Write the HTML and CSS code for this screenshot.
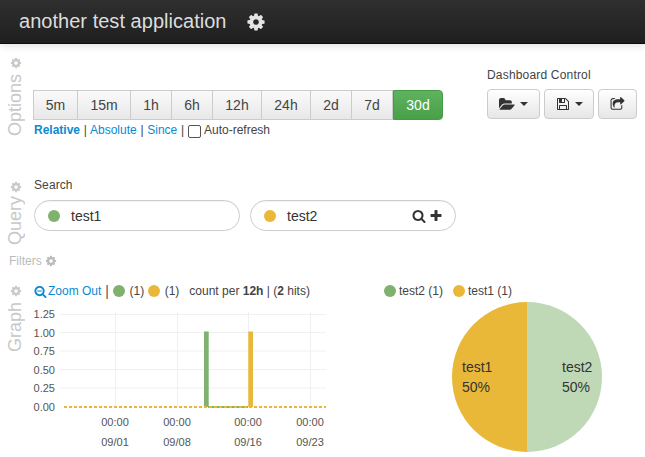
FILE: index.html
```html
<!DOCTYPE html>
<html lang="en">
<head>
<meta charset="utf-8">
<title>another test application</title>
<link rel="stylesheet" href="styles.css">
</head>
<body>
<svg class="defs" width="0" height="0" aria-hidden="true">
  <symbol id="cog" viewBox="0 0 1792 1792"><path d="M1152 896q0-106-75-181t-181-75-181 75-75 181 75 181 181 75 181-75 75-181zm512-109v222q0 12-8 23t-20 13l-185 28q-19 54-39 91 35 50 107 138 10 12 10 25t-9 23q-27 37-99 108t-94 71q-12 0-26-9l-138-108q-44 23-91 38-16 136-29 186-7 28-36 28h-222q-14 0-24.500-8.500t-11.500-21.500l-28-184q-49-16-90-37l-141 107q-10 9-25 9-14 0-25-11-126-114-165-168-7-10-7-23 0-12 8-23 15-21 51-66.500t54-70.500q-27-50-41-99l-183-27q-13-2-21-12.500t-8-23.500v-222q0-12 8-23t19-13l186-28q14-46 39-92-40-57-107-138-10-12-10-24 0-10 9-23 26-36 98.500-107.500t94.500-71.500q13 0 26 10l138 107q44-23 91-38 16-136 29-186 7-28 36-28h222q14 0 24.500 8.500t11.500 21.500l28 184q49 16 90 37l142-107q9-9 24-9 13 0 25 10 129 119 165 170 7 8 7 22 0 12-8 23-15 21-51 66.500t-54 70.500q26 50 41 98l183 28q13 2 21 12.500t8 23.500z"/></symbol>
  <symbol id="search" viewBox="0 0 1792 1792"><path d="M1216 832q0-185-131.500-316.500t-316.500-131.500-316.500 131.500-131.500 316.500 131.500 316.500 316.500 131.500 316.500-131.500 131.500-316.500zm512 832q0 52-38 90t-90 38q-54 0-90-38l-343-342q-179 124-399 124-143 0-273.500-55.500t-225-150-150-225-55.500-273.500 55.500-273.500 150-225 225-150 273.500-55.500 273.500 55.500 225 150 150 225 55.500 273.500q0 220-124 399l343 343q37 37 37 90z"/></symbol>
  <symbol id="zoomout" viewBox="0 0 1792 1792"><path d="M1088 800v64q0 13-9.500 22.500t-22.500 9.500h-576q-13 0-22.500-9.500t-9.500-22.500v-64q0-13 9.500-22.500t22.500-9.500h576q13 0 22.500 9.500t9.500 22.500zm128 32q0-185-131.500-316.500t-316.500-131.500-316.500 131.500-131.500 316.500 131.500 316.500 316.500 131.500 316.500-131.500 131.500-316.500zm512 832q0 53-37.500 90.500t-90.500 37.500q-54 0-90-38l-343-342q-179 124-399 124-143 0-273.500-55.500t-225-150-150-225-55.500-273.500 55.500-273.500 150-225 225-150 273.500-55.500 273.500 55.500 225 150 150 225 55.500 273.500q0 220-124 399l343 343q37 37 37 90z"/></symbol>
  <symbol id="plus" viewBox="0 0 1792 1792"><path d="M1600 736v192q0 40-28 68t-68 28h-416v416q0 40-28 68t-68 28h-192q-40 0-68-28t-28-68v-416h-416q-40 0-68-28t-28-68v-192q0-40 28-68t68-28h416v-416q0-40 28-68t68-28h192q40 0 68 28t28 68v416h416q40 0 68 28t28 68z"/></symbol>
  <symbol id="folder" viewBox="0 0 1920 1792"><path d="M1879 952q0 31-31 66l-336 396q-43 51-120.500 86.500t-143.500 35.500h-1088q-34 0-60.500-13t-26.500-43q0-31 31-66l336-396q43-51 120.500-86.500t143.500-35.500h1088q34 0 60.500 13t26.500 43zm-343-344v160h-832q-94 0-197 47.500t-164 119.500l-337 396-5 6q0-4-.5-12.500t-.5-12.500v-960q0-92 66-158t158-66h320q92 0 158 66t66 158v32h544q92 0 158 66t66 158z"/></symbol>
  <symbol id="save" viewBox="0 0 1792 1792"><path d="M512 1536h768v-384h-768v384zm896 0h128v-896q0-14-10-38.500t-20-34.500l-281-281q-10-10-34-20t-39-10v416q0 40-28 68t-68 28h-576q-40 0-68-28t-28-68v-416h-128v1280h128v-416q0-40 28-68t68-28h832q40 0 68 28t28 68v416zm-384-928v-320q0-13-9.500-22.500t-22.500-9.500h-192q-13 0-22.500 9.500t-9.500 22.500v320q0 13 9.500 22.500t22.500 9.500h192q13 0 22.500-9.500t9.500-22.500zm640 32v928q0 40-28 68t-68 28h-1344q-40 0-68-28t-28-68v-1344q0-40 28-68t68-28h928q40 0 88 20t76 48l280 280q28 28 48 76t20 88z"/></symbol>
  <symbol id="share" viewBox="0 0 1792 1792"><path d="M1472 989v259q0 119-84.500 203.500t-203.500 84.500h-832q-119 0-203.500-84.500t-84.500-203.500v-832q0-119 84.500-203.500t203.500-84.500h255q13 0 22.500 9.500t9.500 22.500q0 27-26 32-77 26-133 60-10 4-16 4h-112q-66 0-113 47t-47 113v832q0 66 47 113t113 47h832q66 0 113-47t47-113v-214q0-19 18-29 28-13 54-37 16-16 35-8 21 9 21 29zm237-496l-384 384q-18 19-45 19-12 0-25-5-39-17-39-59v-192h-160q-323 0-438 131-119 137-74 473 3 23-20 34-8 2-12 2-16 0-26-13-10-14-21-31t-39.500-68.500-49.500-99.500-38.500-114-17.500-122q0-49 3.500-91t14-90 28-88 47-81.500 68.500-74 94.500-61.500 124.500-48.500 159.500-30.500 196.500-11h160v-192q0-42 39-59 13-5 25-5 26 0 45 19l384 384q19 19 19 45t-19 45z"/></symbol>
</svg>

<header class="topbar">
  <span class="brand">another test application</span>
  <svg class="brand-cog"><use href="#cog"/></svg>
</header>

<main>
  <section class="row row-options">
    <div class="side">
      <svg class="side-cog"><use href="#cog"/></svg>
      <span class="side-label">Options</span>
    </div>
    <div class="timepicker">
      <div class="btn-group">
        <span class="seg seg-5m">5m</span><span class="seg seg-15m">15m</span><span class="seg seg-h">1h</span><span class="seg seg-h">6h</span><span class="seg seg-12">12h</span><span class="seg seg-12">24h</span><span class="seg seg-h">2d</span><span class="seg seg-h">7d</span><span class="seg seg-active">30d</span>
      </div>
      <div class="time-links"><a class="link strong">Relative</a> | <a class="link">Absolute</a> | <a class="link">Since</a> | <span class="check"></span> Auto-refresh</div>
    </div>
    <div class="dash">
      <div class="dash-title">Dashboard Control</div>
      <div class="dash-btns">
        <span class="tool tool-open"><svg class="ic-folder"><use href="#folder"/></svg><i class="caret"></i></span>
        <span class="tool tool-save"><svg class="ic-save"><use href="#save"/></svg><i class="caret"></i></span>
        <span class="tool tool-share"><svg class="ic-share"><use href="#share"/></svg></span>
      </div>
    </div>
  </section>

  <section class="row row-query">
    <div class="side">
      <svg class="side-cog"><use href="#cog"/></svg>
      <span class="side-label">Query</span>
    </div>
    <div class="query">
      <div class="query-title">Search</div>
      <div class="pills">
        <div class="pill"><i class="dot green"></i><span class="pill-text">test1</span></div>
        <div class="pill"><i class="dot yellow"></i><span class="pill-text">test2</span>
          <span class="pill-tools"><svg class="ic-search"><use href="#search"/></svg><svg class="ic-plus"><use href="#plus"/></svg></span>
        </div>
      </div>
    </div>
  </section>

  <div class="filters">Filters <svg class="filters-cog"><use href="#cog"/></svg></div>

  <section class="row row-graph">
    <div class="side">
      <svg class="side-cog"><use href="#cog"/></svg>
      <span class="side-label">Graph</span>
    </div>
    <div class="histogram">
      <div class="graph-legend">
        <svg class="ic-zoom"><use href="#zoomout"/></svg><a class="link">Zoom Out</a>
        <span class="bar-sep">|</span>
        <i class="dot green"></i><span class="count">(1)</span>
        <i class="dot yellow"></i><span class="count">(1)</span>
        <span class="per">count per <b>12h</b> | (<b>2</b> hits)</span>
      </div>
      <svg class="chart" width="296" height="152" viewBox="30 305 296 152">
        <g class="grid">
          <path d="M60 314.500H326M60 332.500H326M60 351H326M60 369.500H326M60 388H326"/>
          <path d="M115.500 312V407M177.500 312V407M248.500 312V407M310.500 312V407"/>
        </g>
        <g class="y-labels">
          <text x="55" y="318">1.25</text>
          <text x="55" y="337">1.00</text>
          <text x="55" y="355">0.75</text>
          <text x="55" y="374">0.50</text>
          <text x="55" y="392">0.25</text>
          <text x="55" y="411">0.00</text>
        </g>
        <rect class="s-green" x="204" y="331.500" width="4.700" height="75.500"/>
        <rect class="s-yellow" x="248.300" y="331.500" width="4.700" height="75.500"/>
        <path class="base-green" d="M208 407H248"/>
        <path class="base-yellow" d="M64 407H326"/>
        <g class="x-labels">
          <text x="115" y="426">00:00</text><text x="177" y="426">00:00</text><text x="248" y="426">00:00</text><text x="310" y="426">00:00</text>
          <text x="115" y="446">09/01</text><text x="177" y="446">09/08</text><text x="248" y="446">09/16</text><text x="310" y="446">09/23</text>
        </g>
      </svg>
    </div>
    <div class="terms">
      <div class="terms-legend">
        <i class="dot green"></i><span>test2 (1)</span>
        <i class="dot yellow"></i><span>test1 (1)</span>
      </div>
      <svg class="pie" width="152" height="152" viewBox="451 301 152 152">
        <path class="s-yellow" d="M527 302A75 75 0 0 0 527 452Z"/>
        <path class="s-pale" d="M527 302A75 75 0 0 1 527 452Z"/>
        <g class="pie-labels">
          <text x="462" y="372">test1</text><text x="462" y="392">50%</text>
          <text x="562" y="372">test2</text><text x="562" y="392">50%</text>
        </g>
      </svg>
    </div>
  </section>
</main>
</body>
</html>
```

FILE: styles.css
```css
* { box-sizing: border-box; }
html, body { margin: 0; height: 100%; overflow: hidden; background: #fff; }
body { font: 12px/15px "Liberation Sans", Arial, sans-serif; color: #444; width: 645px; height: 457px; }
.defs { display: block; height: 0; }
svg { fill: currentColor; display: block; }

.topbar {
  height: 44px; display: flex; align-items: center; padding: 0 0 1px 19px; color: #ddd;
  background: linear-gradient(#2f2f2f, #1f1f1f); border-bottom: 1px solid #0c0c0c;
  box-shadow: 0 2px 8px rgba(0,0,0,.12);
}
.brand { font-size: 20px; line-height: 24px; letter-spacing: .03px; }
.brand-cog { width: 20px; height: 20px; margin: 2px 0 0 19px; color: #e4e4e4; }

.row { display: flex; }
.side { width: 34px; flex: none; display: flex; flex-direction: column; align-items: center; color: #c9c9c9; }
.side-cog { width: 12px; height: 12px; margin: 0 3px 0 0; flex: none; }
.side-label { writing-mode: vertical-rl; transform: rotate(180deg); font-size: 18px; line-height: 20px; margin: 5px 5px 0 0; color: #c8c8c8; }
.row-query .side-label { margin-top: 3px; }
.row-graph .side-label { margin-top: 5px; }

.row-options { height: 130px; padding-top: 13px; }
.timepicker { padding-top: 33px; width: 453px; }
.btn-group { display: flex; width: 410px; height: 30px; margin-left: -1px; }
.seg {
  display: flex; align-items: center; justify-content: center; font-size: 14px; color: #444;
  background: linear-gradient(#fafafa, #e8e8e8); border: 1px solid #ccc; border-left-width: 0;
}
.seg:first-child { border-left-width: 1px; }
.seg-5m { width: 45px; } .seg-15m { width: 53px; } .seg-h { width: 41px; } .seg-12 { width: 49px; }
.seg-active { width: 50px; color: #fff; background: linear-gradient(#5fb35f, #48a048); border: 1px solid #449d44; border-radius: 0 4px 4px 0; }
.time-links { line-height: 20px; color: #444; white-space: nowrap; word-spacing: .4px; }
.link { color: #0a8ad0; }
.strong { font-weight: bold; }
.check { display: inline-block; width: 13px; height: 13px; border: 1px solid #555; border-radius: 2px; vertical-align: -4px; background: #fff; }

.dash { padding-top: 10px; }
.dash-title { font-size: 12px; line-height: 16px; letter-spacing: .18px; }
.dash-btns { display: flex; gap: 4px; margin-top: 6px; }
.tool {
  height: 30px; display: flex; align-items: center; justify-content: center; gap: 5px; color: #333;
  background: linear-gradient(#fff, #e6e6e6); border: 1px solid #ccc; border-radius: 4px;
}
.tool-open { width: 53px; } .tool-save { width: 50px; } .tool-share { width: 39px; }
.caret { width: 0; height: 0; border: 4px solid transparent; border-top-color: #333; border-bottom-width: 0; }
.ic-folder { width: 16px; height: 15px; }
.ic-save { width: 14px; height: 14px; }
.ic-share { width: 15px; height: 15px; }

.row-query { height: 81px; margin-top: -1px; }
.row-query .side { padding-top: 8px; }
.query { width: 422px; padding-top: 2px; }
.query-title { line-height: 16px; margin-top: 2px; letter-spacing: .1px; }
.pills { display: flex; gap: 10px; margin-top: 7px; }
.pill {
  width: 206px; height: 31px; display: flex; align-items: center; border: 1px solid #ccc; border-radius: 15.500px;
  padding-left: 13px; font-size: 14px; color: #333; box-shadow: inset 0 1px 1px rgba(0,0,0,.05);
}
.pill .dot { width: 12px; height: 12px; margin-right: 11px; }
.pill-text { padding-top: 1px; }
.dot { display: block; flex: none; width: 12px; height: 12px; border-radius: 50%; }
.green { background: #7eb26d; }
.yellow { background: #eab839; }
.pill-tools { display: flex; align-items: center; margin-left: auto; margin-right: 12px; gap: 3px; color: #333; }
.ic-search { width: 14px; height: 14px; }
.ic-plus { width: 14px; height: 14px; }

.filters { display: flex; align-items: center; gap: 3px; height: 16px; margin: -1px 0 0 9px; color: #bbb; }
.filters-cog { width: 12px; height: 12px; }

.row-graph { margin-top: 15px; }
.row-graph .side { padding-top: 1px; }
.histogram { width: 296px; }
.graph-legend { display: flex; align-items: center; height: 14px; white-space: pre; }
.ic-zoom { width: 13px; height: 13px; color: #0a8ad0; margin-right: 1px; }
.bar-sep { font-size: 14px; margin: 0 4px; color: #555; }
.count { margin: 0 4px 0 4.500px; }
.per { margin-left: 6px; }
.chart { margin: 7px 0 0 -4px; }
.grid path { fill: none; stroke: #f0f0f0; stroke-width: 1; }
.chart text { font: 11px "Liberation Sans", Arial, sans-serif; fill: #555; }
.y-labels text { text-anchor: end; }
.x-labels text { text-anchor: middle; }
.s-green { fill: #7eb26d; }
.s-yellow { fill: #eab839; }
.s-pale { fill: #bfd9b7; }
.base-green { stroke: #7eb26d; stroke-width: 2; fill: none; }
.base-yellow { stroke: #eab839; stroke-width: 2; stroke-dasharray: 3 2; fill: none; }

.terms { flex: none; width: 219px; margin-left: 54px; }
.terms-legend { display: flex; align-items: center; height: 14px; gap: 3px; white-space: pre; }
.terms-legend span { margin-right: 7px; }
.pie { margin: 3px 0 0 67px; }
.pie-labels text { font: 14px "Liberation Sans", Arial, sans-serif; fill: #333; }
```
